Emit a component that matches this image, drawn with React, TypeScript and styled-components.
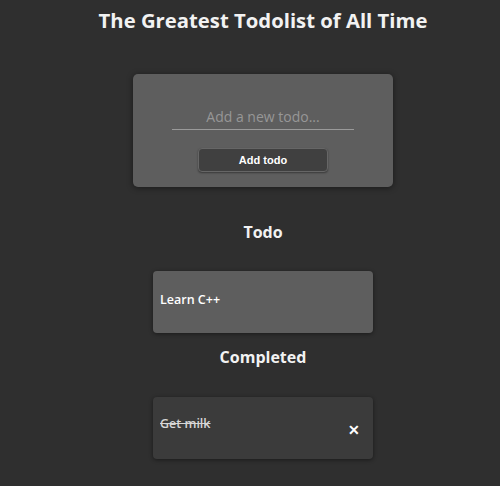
import React, { useState } from "react";
import styled, { createGlobalStyle } from "styled-components";

const GlobalStyle = createGlobalStyle`
  html, body {
    margin: 0;
    padding: 0;
    background-color: #2f2f2f;
  }
  body {
    font-family: "Open Sans", "Noto Sans", sans-serif;
    color: #ffffff;
  }
`;

const PageDiv = styled.div`
  display: flex;
  flex-direction: column;
  align-items: center;
  padding: 6px 0 0 26px;
  min-height: 486px;
  box-sizing: border-box;
`;

const TitleH1 = styled.h1`
  margin: 0;
  font-size: 20.3px;
  line-height: 28px;
  font-weight: 700;
  color: #f2f2f2;
`;

const AddCardDiv = styled.div`
  width: 260px;
  height: 113px;
  box-sizing: border-box;
  margin-top: 40px;
  padding-top: 32px;
  background-color: #5e5e5e;
  border-radius: 5px;
  box-shadow: 0 1px 6px rgba(0, 0, 0, 0.45);
  display: flex;
  flex-direction: column;
  align-items: center;
`;

const TodoInput = styled.input`
  width: 182px;
  height: 24px;
  box-sizing: border-box;
  background: transparent;
  border: none;
  border-bottom: 1px solid #9a9a9a;
  outline: none;
  text-align: center;
  font-family: "Open Sans", "Noto Sans", sans-serif;
  font-size: 14px;
  color: #ffffff;
  padding: 0 0 2px 0;
  &::placeholder {
    color: #979797;
  }
`;

const AddButton = styled.button`
  margin-top: 18px;
  width: 130px;
  height: 24px;
  background-color: #404040;
  border: 1px solid #666666;
  border-radius: 4px;
  box-shadow: 0 1px 2px rgba(0, 0, 0, 0.4);
  color: #ffffff;
  font-family: "Liberation Sans", Arial, sans-serif;
  font-weight: 700;
  font-size: 11px;
  cursor: pointer;
`;

const SectionH2 = styled.h2<{ $top: number }>`
  margin: ${(p) => p.$top}px 0 0 0;
  font-size: 16px;
  line-height: 22px;
  font-weight: 700;
  color: #f2f2f2;
`;

const ItemDiv = styled.div<{ $done?: boolean; $top: number }>`
  margin-top: ${(p) => p.$top}px;
  width: 220px;
  height: 62px;
  box-sizing: border-box;
  padding: 0 13px 0 7px;
  border-radius: 4px;
  background-color: ${(p) => (p.$done ? "#3b3b3b" : "#5e5e5e")};
  box-shadow: 0 1px 4px rgba(0, 0, 0, 0.45);
  display: flex;
  flex-direction: row;
  align-items: center;
  justify-content: space-between;
`;

const ItemTextSpan = styled.span<{ $done?: boolean }>`
  font-size: 12.5px;
  font-weight: 600;
  color: ${(p) => (p.$done ? "#d6d6d6" : "#ffffff")};
  text-decoration: ${(p) => (p.$done ? "line-through" : "none")};
  margin-top: ${(p) => (p.$done ? "-10px" : "-6px")};
`;

const RemoveButton = styled.button`
  background: none;
  border: none;
  padding: 0;
  margin-top: 4px;
  color: #ffffff;
  font-family: "Liberation Sans", Arial, sans-serif;
  font-weight: 700;
  font-size: 14px;
  cursor: pointer;
`;

interface TodoVO {
  text: string;
  done: boolean;
}

const App = () => {
  const [todos] = useState<TodoVO[]>([
    { text: "Learn C++", done: false },
    { text: "Get milk", done: true },
  ]);
  const [value, setValue] = useState("");

  const open = todos.filter((t) => !t.done);
  const done = todos.filter((t) => t.done);

  return (
    <>
      <GlobalStyle />
      <PageDiv>
        <TitleH1>The Greatest Todolist of All Time</TitleH1>
        <AddCardDiv>
          <TodoInput
            placeholder="Add a new todo..."
            value={value}
            onChange={(e) => setValue(e.target.value)}
          />
          <AddButton>Add todo</AddButton>
        </AddCardDiv>
        <SectionH2 $top={34}>Todo</SectionH2>
        {open.map((t, i) => (
          <ItemDiv $top={28} key={i}>
            <ItemTextSpan>{t.text}</ItemTextSpan>
          </ItemDiv>
        ))}
        <SectionH2 $top={13}>Completed</SectionH2>
        {done.map((t, i) => (
          <ItemDiv $done $top={29} key={i}>
            <ItemTextSpan $done>{t.text}</ItemTextSpan>
            <RemoveButton>✕</RemoveButton>
          </ItemDiv>
        ))}
      </PageDiv>
    </>
  );
};

export default App;
